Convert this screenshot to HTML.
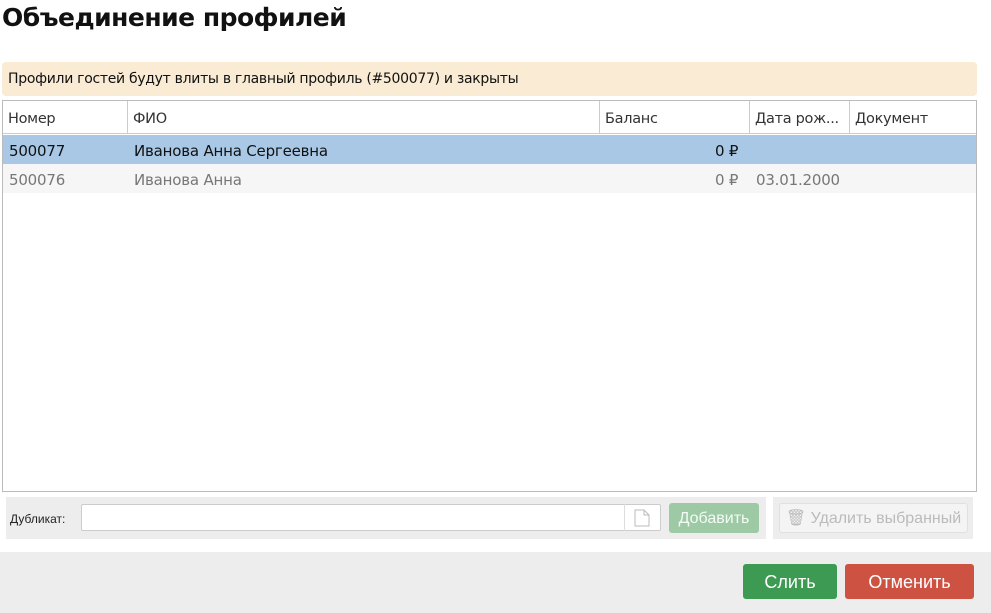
<!DOCTYPE html>
<html><head><meta charset="utf-8"><style>
*{box-sizing:border-box;margin:0;padding:0}
body{width:991px;height:613px;background:#fff;font-family:"DejaVu Sans","Liberation Sans",sans-serif;color:#222;position:relative;overflow:hidden}
.abs{position:absolute}
h1{position:absolute;left:2px;top:3px;font-size:25px;font-weight:bold;font-family:"DejaVu Sans",sans-serif;letter-spacing:-0.5px;color:#111}
.warn{left:2px;top:62px;width:975px;height:34px;background:#faebd4;border-radius:4px;font-size:14px;line-height:35px;padding-left:6px;color:#111;letter-spacing:-0.3px}
.grid{left:2px;top:100px;width:975px;height:392px;border:1px solid #bbb;background:#fff}
.th{position:absolute;top:0;height:33px;line-height:36px;font-size:14.5px;padding-left:5px;border-right:1px solid #ccc;border-bottom:1px solid #ccc;color:#333;letter-spacing:-0.3px}
.row{position:absolute;left:0;width:973px;height:29px;font-size:15px;line-height:32px;letter-spacing:-0.2px}
.row span{position:absolute}
.bar{left:6px;top:497px;height:42px;background:#ededed}
.inp{left:81px;top:504px;width:580px;height:27px;border:1px solid #ccc;background:#fff;border-radius:2px}
.btn{border-radius:3px;font-family:"Liberation Sans",sans-serif;text-align:center}
</style></head><body>
<h1>Объединение профилей</h1>
<div class="abs warn">Профили гостей будут влиты в главный профиль (#500077) и закрыты</div>
<div class="abs grid">
 <div class="th" style="left:0;width:125px">Номер</div>
 <div class="th" style="left:125px;width:472px">ФИО</div>
 <div class="th" style="left:597px;width:150px">Баланс</div>
 <div class="th" style="left:747px;width:100px">Дата рож...</div>
 <div class="th" style="left:847px;width:126px;border-right:none">Документ</div>
 <div class="row" style="top:34px;background:#a9c8e6;color:#111"><span style="left:6px">500077</span><span style="left:131px">Иванова Анна Сергеевна</span><span style="left:712px">0 ₽</span></div>
 <div class="row" style="top:63px;background:#f6f6f6;color:#777"><span style="left:6px">500076</span><span style="left:131px">Иванова Анна</span><span style="left:712px">0 ₽</span><span style="left:753px">03.01.2000</span></div>
</div>
<div class="abs bar" style="width:760px"></div>
<div class="abs bar" style="left:773px;width:200px"></div>
<div class="abs" style="left:10px;top:512px;font-size:12px;font-family:'Liberation Sans',sans-serif;color:#222">Дубликат:</div>
<div class="abs inp"></div>
<div class="abs" style="left:624px;top:504px;width:37px;height:27px;border-left:1px solid #ddd"></div>
<svg class="abs" style="left:634px;top:509px" width="16" height="18"><path d="M1 1H10L15 6V17H1Z M10 1V6H15" fill="#fff" stroke="#bbb"/></svg>
<div class="abs btn" style="left:669px;top:503px;width:90px;height:30px;background:#9dcaa5;line-height:31px;font-size:16px;color:#f3fbf4">Добавить</div>
<div class="abs btn" style="left:779px;top:503px;width:189px;height:30px;background:#f4f4f4;border:1px solid #e0e0e0;color:#bbb;line-height:30px;font-size:16px">🗑 Удалить выбранный</div>
<div class="abs" style="left:0;top:552px;width:991px;height:61px;background:#ededed"></div>
<div class="abs btn" style="left:743px;top:564px;width:94px;height:35px;background:#3c9a52;color:#fff;line-height:36px;font-size:18px">Слить</div>
<div class="abs btn" style="left:845px;top:564px;width:129px;height:35px;background:#cd5242;color:#fff;line-height:36px;font-size:18px">Отменить</div>
</body></html>
